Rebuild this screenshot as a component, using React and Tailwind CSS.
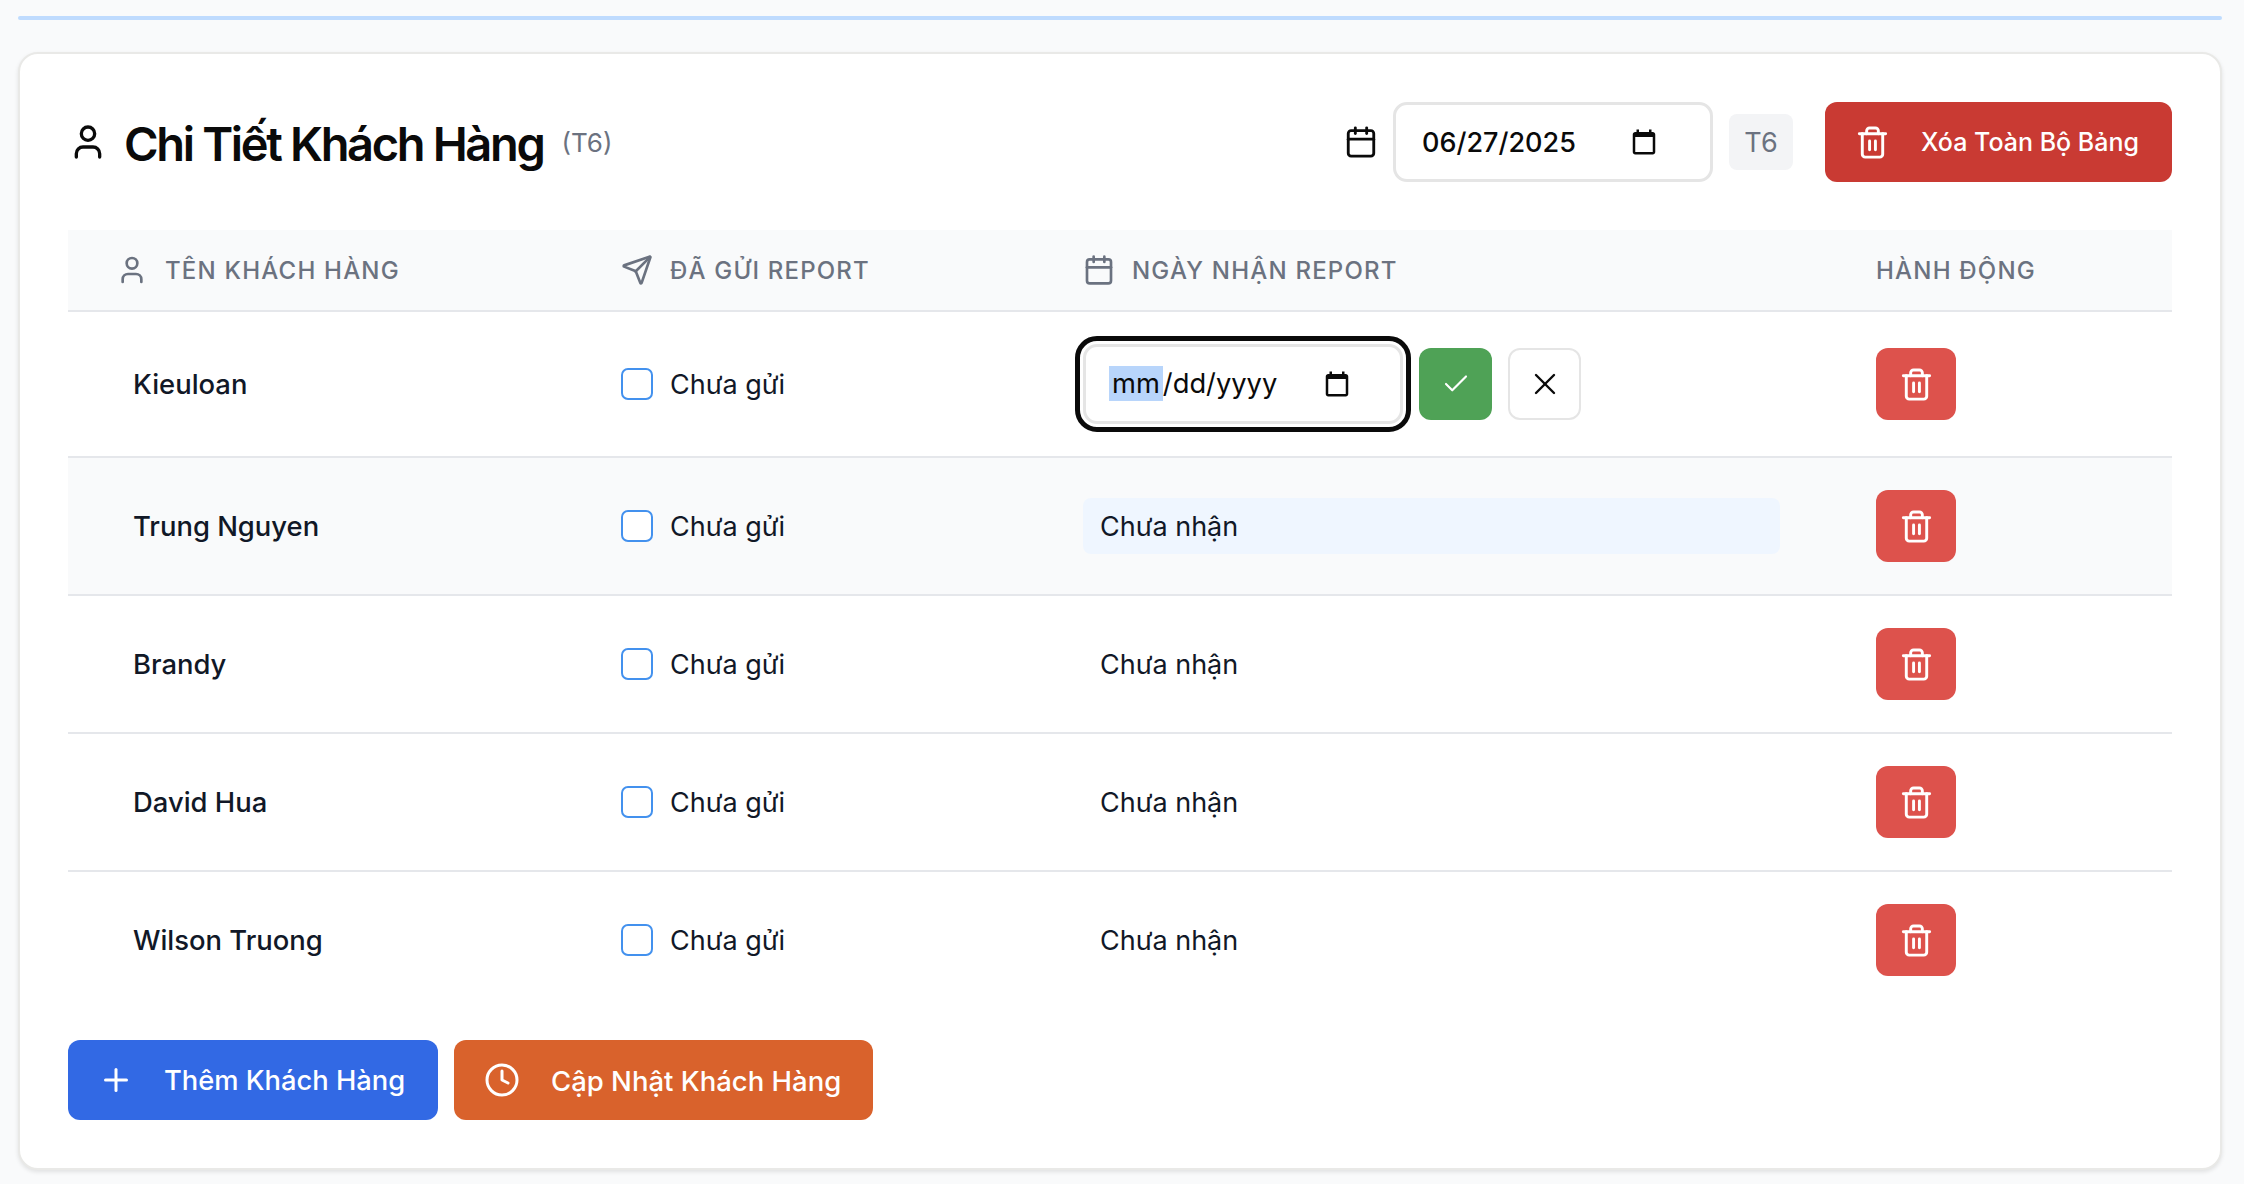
import { Calendar, Check, Clock, Plus, Send, Trash2, User, X } from "lucide-react"

const customers = ["Kieuloan", "Trung Nguyen", "Brandy", "David Hua", "Wilson Truong"]

const rowGrid = "grid grid-cols-[553px_462px_793px_296px] items-center"

function PickerIcon() {
  return (
    <svg className="w-[30px] h-[30px] shrink-0" viewBox="0 0 24 24" fill="currentColor">
      <path d="M19 4h-1V2h-2v2H8V2H6v2H5c-1.1 0-2 .9-2 2v14c0 1.1.9 2 2 2h14c1.1 0 2-.9 2-2V6c0-1.1-.9-2-2-2zm0 16H5V8h14v12z" />
    </svg>
  )
}

function HeaderCell({ icon: Icon, label, className }) {
  return (
    <div className={`flex items-center gap-[17px] ${className}`}>
      {Icon && <Icon className="w-8 h-8 shrink-0" strokeWidth={2} />}
      <span className="pt-[2px]">{label}</span>
    </div>
  )
}

function DeleteButton() {
  return (
    <button className="w-20 h-[72px] rounded-xl bg-[#dd524c] text-white flex items-center justify-center">
      <Trash2 className="w-[35px] h-[35px]" strokeWidth={2} />
    </button>
  )
}

function CustomerRow({ name, index, last }) {
  const editing = index === 0
  const hovered = index === 1

  return (
    <div className={`${rowGrid} py-8 ${last ? "" : "border-b-2 border-[#e5e7eb]"} ${hovered ? "bg-[#f9fafb]" : ""}`}>
      <div className="pl-[65px] text-[27.4px] font-medium text-[#111827]">{name}</div>

      <label className="flex items-center gap-[17px] text-[#111827]">
        <span className="w-8 h-8 rounded-[7px] border-2 border-[#4391ee] bg-white" />
        <span className="pt-px">Chưa gửi</span>
      </label>

      {editing ? (
        <div className="flex items-center">
          <div className="w-[320px] h-20 rounded-[14px] border-[3px] border-[#e5e5e5] outline-[5px] outline-offset-[3px] outline-[#0a0a0a] flex items-center justify-between pl-[23px] pr-[48px] text-[27.3px] text-[#0a0a0a] bg-white">
            <span>
              <span className="bg-[#b8d5fb] py-[1px] px-[3px]">mm</span>/dd/yyyy
            </span>
            <PickerIcon />
          </div>
          <button className="ml-4 w-[73px] h-[72px] rounded-xl bg-[#4fa256] text-white flex items-center justify-center">
            <Check className="w-[30px] h-[30px]" strokeWidth={1.7} />
          </button>
          <button className="ml-4 w-[73px] h-[72px] rounded-xl border-2 border-[#e5e5e5] bg-white text-[#0a0a0a] flex items-center justify-center">
            <X className="w-9 h-9" strokeWidth={1.6} />
          </button>
        </div>
      ) : (
        <div className={`mr-24 h-14 flex items-center pl-[17px] pt-px rounded-lg text-[#111827] ${hovered ? "bg-[#eff6ff]" : ""}`}>
          Chưa nhận
        </div>
      )}

      <div>
        <DeleteButton />
      </div>
    </div>
  )
}

export default function App() {
  return (
    <div className="min-h-screen bg-[#f9fafb] pl-[18px] pr-[22px] pt-4 font-['Inter',sans-serif] text-[27px] leading-10">
      <div className="h-1 bg-[#bfdbfe] rounded-full mb-8" />

      <div className="bg-white border-2 border-[#e9e9e7] rounded-[20px] p-12 shadow-[0_2px_4px_rgba(0,0,0,0.1)]">
        <div className="flex items-center justify-between mb-12">
          <div className="flex items-center">
            <User className="w-10 h-10 text-[#0a0a0a]" strokeWidth={2} />
            <h1 className="ml-4 mt-1 text-[47px] leading-[56px] font-semibold tracking-[-0.05em] text-[#0a0a0a]">
              Chi Tiết Khách Hàng
            </h1>
            <span className="ml-[18px] mt-[2px] text-[26px] text-[#6b7280]">(T6)</span>
          </div>

          <div className="flex items-center">
            <Calendar className="w-[34px] h-[34px] text-[#0a0a0a]" strokeWidth={2} />
            <div className="ml-[15px] w-[320px] h-20 rounded-[14px] border-[3px] border-[#e5e5e5] flex items-center justify-between pl-[26px] pr-[51px] text-[#0a0a0a] font-medium bg-white">
              <span className="pt-px">06/27/2025</span>
              <PickerIcon />
            </div>
            <span className="ml-4 h-14 w-16 rounded-lg bg-[#f3f4f6] text-[#6b7280] flex items-center justify-center pt-px">
              T6
            </span>
            <button className="ml-8 w-[347px] h-20 rounded-xl bg-[#c93a33] text-white text-[25px] font-medium flex items-center pl-[30px] gap-[31px]">
              <Trash2 className="w-[35px] h-[35px]" strokeWidth={2} />
              Xóa Toàn Bộ Bảng
            </button>
          </div>
        </div>

        <div className={`${rowGrid} h-[82px] bg-[#f9fafb] border-b-2 border-[#e5e7eb] text-[24px] font-medium uppercase tracking-[0.05em] text-[#6b7280]`}>
          <HeaderCell icon={User} label="Tên khách hàng" className="pl-[48px]" />
          <HeaderCell icon={Send} label="Đã gửi report" />
          <HeaderCell icon={Calendar} label="Ngày nhận report" />
          <HeaderCell label="Hành động" />
        </div>

        {customers.map((name, i) => (
          <CustomerRow key={name} name={name} index={i} last={i === customers.length - 1} />
        ))}

        <div className="flex gap-4 mt-8">
          <button className="w-[370px] h-20 rounded-xl bg-[#3269e4] text-white text-[27.3px] font-medium flex items-center pl-[30px] gap-[30px]">
            <Plus className="w-9 h-9" strokeWidth={2} />
            <span className="pt-px">Thêm Khách Hàng</span>
          </button>
          <button className="w-[419px] h-20 rounded-xl bg-[#d9622c] text-white text-[27.5px] font-medium flex items-center pl-[30px] gap-[31px]">
            <Clock className="w-9 h-9" strokeWidth={2} />
            <span className="pt-px">Cập Nhật Khách Hàng</span>
          </button>
        </div>
      </div>
    </div>
  )
}
